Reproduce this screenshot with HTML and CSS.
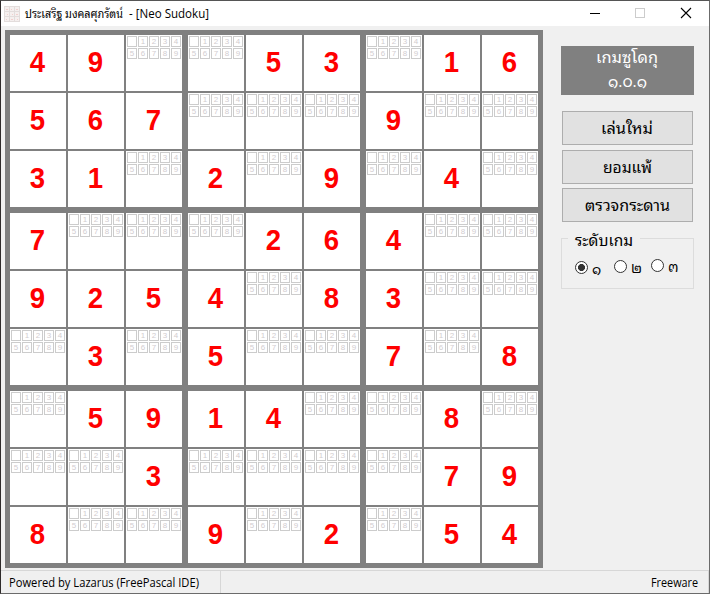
FILE: index.html
```html
<!DOCTYPE html>
<html lang="th">
<head>
<meta charset="utf-8">
<title>Neo Sudoku</title>
<link rel="stylesheet" href="styles.css">
</head>
<body>
<div class="window">
  <header class="titlebar">
    <svg class="app-icon" width="16" height="16" viewBox="0 0 16 16" shape-rendering="crispEdges">
      <rect width="16" height="16" fill="#f5f0ef"/>
      <path d="M0 .5H16M0 5.5H16M0 10.5H16M0 15.5H16M.5 0V16M5.5 0V16M10.5 0V16M15.5 0V16" stroke="#e3dddc" fill="none"/>
      <path d="M2 3h2M7 3h1M12 3h2M3 8h1M8 8h1M12 8h2M2 13h1M7 13h2M13 13h1" stroke="#f2cfcd"/>
    </svg>
    <svg class="title" width="200" height="24"><text x="0" y="16" textLength="98" lengthAdjust="spacingAndGlyphs">ประเสริฐ มงคลศุภรัตน์</text><text x="104" y="16" textLength="80" lengthAdjust="spacingAndGlyphs">- [Neo Sudoku]</text></svg>
    <svg class="controls" width="135" height="25" viewBox="0 0 135 25" fill="none" stroke="#000">
      <path d="M16 12.5h10"/>
      <rect x="61.5" y="7.5" width="9" height="9" stroke="#ccc"/>
      <path d="M107 7l10 10M117 7l-10 10" stroke-width="1.1"/>
    </svg>
  </header>
  <main class="content">
    <div class="board" id="board"></div>
    <aside class="side">
      <div class="banner">
        <svg width="133" height="49"><text x="35" y="17" textLength="62" lengthAdjust="spacingAndGlyphs">เกมซูโดกุ</text><text x="47" y="41" textLength="39" lengthAdjust="spacingAndGlyphs">๑.๐.๑</text></svg>
      </div>
      <button class="btn first"><svg width="131" height="32"><text x="38" y="22" textLength="52" lengthAdjust="spacingAndGlyphs">เล่นใหม่</text></svg></button>
      <button class="btn second"><svg width="131" height="32"><text x="40" y="22" textLength="49" lengthAdjust="spacingAndGlyphs">ยอมแพ้</text></svg></button>
      <button class="btn"><svg width="131" height="32"><text x="22" y="22" textLength="85" lengthAdjust="spacingAndGlyphs">ตรวจกระดาน</text></svg></button>
      <section class="level">
        <div class="legend"><svg width="72" height="24"><text x="7" y="19" textLength="58" lengthAdjust="spacingAndGlyphs">ระดับเกม</text></svg></div>
        <div class="options">
          <label class="option checked"><i class="radio"></i><span>๑</span></label>
          <label class="option two"><i class="radio"></i><span>๒</span></label>
          <label class="option three"><i class="radio"></i><span>๓</span></label>
        </div>
      </section>
    </aside>
  </main>
  <footer class="status">
    <div class="status-left"><svg width="200" height="22"><text x="0" y="16" textLength="190" lengthAdjust="spacingAndGlyphs">Powered by Lazarus (FreePascal IDE)</text></svg></div>
    <div class="status-right"><svg width="50" height="22"><text x="0" y="16" textLength="47" lengthAdjust="spacingAndGlyphs">Freeware</text></svg></div>
  </footer>
</div>
<script src="board.js"></script>
</body>
</html>
```
FILE: styles.css
```css
* { box-sizing: border-box; }
body { margin: 0; overflow: hidden; font: 12px "Open Sans", "Noto Sans", "Leelawadee UI", "Noto Sans Thai Looped", Loma, sans-serif; color: #000; }
svg { display: block; overflow: visible; }
svg text { fill: currentColor; stroke: none; }
.window { width: 710px; height: 594px; display: flex; flex-direction: column; background: #f0f0f0; border: 1px solid #6b6b6b; border-left-color: #2f2b2b; border-top-color: #555; }
.titlebar { height: 25px; flex: none; display: flex; align-items: center; background: #fff; padding-left: 3px; }
.app-icon { margin-right: 5px; }
.controls { margin-left: auto; }
.content { display: flex; height: 544px; flex: none; padding: 4px 0 0 4px; }
.board { width: 538px; height: 538px; flex: none; padding: 5px; background: #808080; display: grid; grid-template-columns: repeat(3, 172px); grid-auto-rows: 172px; gap: 6px; }
.box { display: grid; grid-template-columns: repeat(3, 56px); grid-auto-rows: 56px; gap: 2px; }
.cell { background: #fff; }
.given { padding-right: 1px; color: #f00; font: bold 29px/55px "Liberation Sans", Arial, sans-serif; text-align: center; }
.given span { display: block; transform: scaleX(.95); }
.notes { display: grid; grid-template-columns: repeat(5, 10px); grid-auto-rows: 11px; gap: 1px; padding: 1px; align-content: start; }
.note { border: 1px solid #ccc; color: #d2cdd0; font: 8px/10px "Liberation Sans", Arial, sans-serif; text-align: center; }
.side { margin: 16px 0 0 18px; width: 133px; }
.banner { height: 49px; background: #808080; color: #fff; font-size: 16px; margin-bottom: 16px; }
.btn { display: block; width: 131px; height: 34px; margin: 0 0 4px 1px; padding: 0; border: 1px solid #adadad; background: #e1e1e1; color: #000; font: inherit; font-size: 16px; }
.btn.first { margin-bottom: 5px; }
.level { margin-top: 16px; height: 51px; border: 1px solid #dcdcdc; font-size: 16px; }
.legend { width: 65px; height: 24px; margin: -12px 0 0 6px; width: 72px; background: #f0f0f0; }
.options { display: flex; padding: 10px 0 0 13px; }
.option { display: flex; align-items: flex-start; gap: 4px; width: 39px; font-size: 14px; line-height: 16px; }
.option.two { margin-top: -1px; width: 37px; }
.option.three { margin-top: -2px; }
.radio { width: 13px; height: 13px; flex: none; border: 1px solid #333; border-radius: 50%; background: #fff; }
.checked .radio { background: radial-gradient(circle, #333 0 3.2px, #fff 3.8px); }
.status { height: 23px; flex: none; border-top: 1px solid #d7d7d7; display: flex; justify-content: space-between; }
.status-left { width: 220px; height: 22px; border-right: 1px solid #d7d7d7; padding-left: 8px; }
.status-right { height: 22px; border-right: 1px solid #d7d7d7; padding-right: 7px; }
```
FILE: board.js
```js
const rows = [
  '49..53.16', '567...9..', '31.2.9.4.',
  '7...264..', '9254.83..', '.3.5..7.8',
  '.5914..8.', '..3....79', '8..9.2.54'
];
const board = document.getElementById('board');
for (let b = 0; b < 9; b++) {
  const box = document.createElement('div');
  box.className = 'box';
  for (let i = 0; i < 9; i++) {
    const value = rows[Math.floor(b / 3) * 3 + Math.floor(i / 3)][(b % 3) * 3 + i % 3];
    const cell = document.createElement('div');
    if (value === '.') {
      cell.className = 'cell notes';
      for (let n = 0; n < 10; n++) {
        const note = document.createElement('span');
        note.className = 'note';
        note.textContent = n || '';
        cell.append(note);
      }
    } else {
      cell.className = 'cell given';
      const digit = document.createElement('span');
      digit.textContent = value;
      cell.append(digit);
    }
    box.append(cell);
  }
  board.append(box);
}
```
